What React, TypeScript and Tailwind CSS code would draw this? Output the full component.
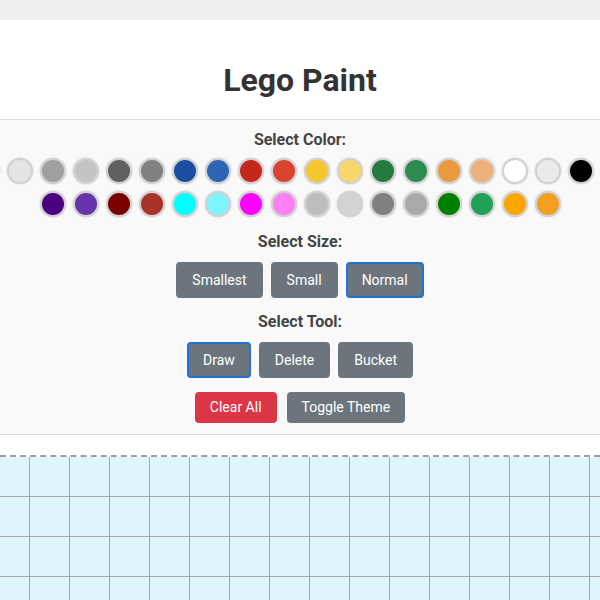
import React, { useState } from "react";

const COLORS: string[] = [
  "#d6d6d6", "#e4e4e4", "#a0a0a0", "#c4c4c4", "#606060", "#808080", "#1b4ea2", "#2e64b4", "#c4281c", "#d9432f",
  "#f4c72e", "#f7d66a", "#257a3e", "#2e8b50", "#e89a3c", "#eeb07a", "#ffffff", "#eaeaea", "#000000", "#333333",
  "#4b0082", "#6633aa", "#7b0000", "#a83428", "#00ffff", "#80f4fc", "#ff00ff", "#ff80f4",
  "#bdbdbd", "#d3d3d3", "#808080", "#a9a9a9", "#008000", "#21a155", "#ffa500", "#f29e1e",
];

const SIZES = ["Smallest", "Small", "Normal"];
const TOOLS = ["Draw", "Delete", "Bucket"];

const Label = ({ children, className }: { children: React.ReactNode; className?: string }) => (
  <div className={`text-center text-[16px] leading-[20px] font-bold text-[#444] ${className ?? ""}`}>{children}</div>
);

const OptionButton = ({ label, active, onClick }: { label: string; active: boolean; onClick: () => void }) => (
  <button
    onClick={onClick}
    className={`bg-[#6c757d] text-white text-[14px] leading-5 px-[14px] py-1.5 rounded border-2 ${
      active ? "border-[#1f72d6]" : "border-[#6c757d]"
    }`}>
    {label}
  </button>
);

export default function App() {
  const [color, setColor] = useState(COLORS[1]);
  const [size, setSize] = useState("Normal");
  const [tool, setTool] = useState("Draw");

  return (
    <div className="w-full h-[600px] overflow-hidden bg-white font-['Roboto',sans-serif]">
      <div className="h-5 bg-[#f0f0f0]" />
      {/* header */}
      <div className="bg-white pt-[42px] pb-[20px] border-b border-[#dddddd]">
        <h1 className="text-center text-[32px] leading-[37px] font-bold text-[#333]">Lego Paint</h1>
      </div>

      {/* controls */}
      <div className="bg-[#f9f9f9] pt-[10px] pb-[11px] border-b border-[#dddddd]">
        <Label>Select Color:</Label>
        <div className="flex justify-center mt-2">
          <div className="w-[670px] shrink-0 flex flex-wrap justify-center gap-[7px]">
            {COLORS.map((c, i) => (
              <button
                key={i}
                onClick={() => setColor(c)}
                title={c}
                className="w-[26px] h-[26px] rounded-full border-2 border-[#d2d2d2] shadow-[0_0_2px_rgba(0,0,0,0.2)]"
                style={{ backgroundColor: c }}
                aria-pressed={color === c}
              />
            ))}
          </div>
        </div>

        <Label className="mt-[15px]">Select Size:</Label>
        <div className="flex justify-center gap-2 mt-[10px]">
          {SIZES.map((s) => (
            <OptionButton key={s} label={s} active={size === s} onClick={() => setSize(s)} />
          ))}
        </div>

        <Label className="mt-[14px]">Select Tool:</Label>
        <div className="flex justify-center gap-2 mt-[10px]">
          {TOOLS.map((t) => (
            <OptionButton key={t} label={t} active={tool === t} onClick={() => setTool(t)} />
          ))}
        </div>

        <div className="flex justify-center gap-[10px] mt-[14px]">
          <button className="bg-[#dc3545] text-white text-[14px] leading-[19px] px-[15px] py-[6px] rounded">Clear All</button>
          <button className="bg-[#6c757d] text-white text-[14px] leading-[19px] px-[15px] py-[6px] rounded">Toggle Theme</button>
        </div>
      </div>

      {/* board */}
      <div className="mt-5 border-t-2 border-dashed border-[#a0a0a0] overflow-hidden">
        <div className="ml-[-10px] w-[640px] flex flex-wrap">
          {Array.from({ length: 64 }).map((_, i) => (
            <div key={i} className="w-10 h-10 bg-[#e1f5fe] border-r border-b border-[#a2a8ac]" />
          ))}
        </div>
      </div>
    </div>
  );
}
